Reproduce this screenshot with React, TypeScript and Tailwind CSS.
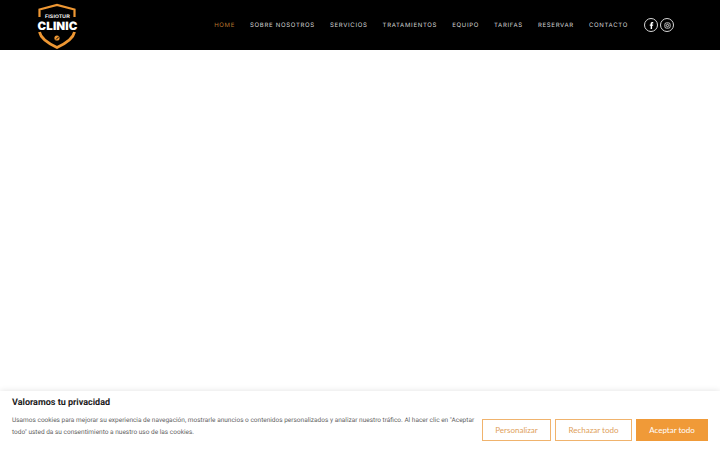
import React from "react";

const nav = ["HOME", "SOBRE NOSOTROS", "SERVICIOS", "TRATAMIENTOS", "EQUIPO", "TARIFAS", "RESERVAR", "CONTACTO"];

function Logo() {
  return (
    <div className="relative w-[41px] h-[46px] shrink-0 mt-[2px]">
      <svg width="41" height="46" viewBox="0 0 41 46" className="absolute inset-0">
        <path d="M2.5 14 L2.5 6.5 L20 2 L37.5 6.5 L37.5 14" fill="none" stroke="#ee9733" strokeWidth="2.2" />
        <path d="M2.5 29 Q4 37 20 44.5 Q36 37 37.5 29" fill="none" stroke="#ee9733" strokeWidth="2.8" />
        <circle cx="20" cy="35" r="2.6" fill="#ee9733" />
        <path d="M19 36.5 L22 33.5" stroke="#000" strokeWidth="1" />
      </svg>
      <div className="absolute left-0 right-0 top-[11px] text-center text-[5px] leading-[6px] font-bold text-white font-['Liberation_Sans',sans-serif] tracking-[0.2px]">FISIOTUR</div>
      <div className="absolute left-0 right-0 top-[16px] text-center text-[11.5px] leading-[14px] font-black tracking-[0.1px] text-white font-['Inter',sans-serif]">CLINIC</div>
    </div>
  );
}

export default function App() {
  return (
    <div className="relative w-[720px] h-[450px] overflow-hidden bg-white font-['Roboto',sans-serif] [text-rendering:geometricPrecision]">
      <header className="h-[50px] bg-black flex items-center pl-[37px] pr-[46px]">
        <Logo />
        <nav className="ml-auto flex items-center gap-[15px] font-['Inter',sans-serif] text-[6px] tracking-[0.7px] text-[#d6d6d6]">
          {nav.map((n, i) => (
            <span key={n} className={i === 0 ? "text-[#b9772f]" : ""}>{n}</span>
          ))}
        </nav>
        <div className="flex items-center gap-[2px] ml-[16px]">
          <span className="w-[14px] h-[14px] rounded-full border border-[#d8d8d8] flex items-center justify-center">
            <svg width="7" height="7" viewBox="0 0 24 24" fill="#fff"><path d="M14 8.5V6.3c0-1 .6-1.3 1.2-1.3H18V0h-3.8C10.6 0 9 2.6 9 5.6v2.9H6V13h3v11h5V13h3.4l.6-4.5z" /></svg>
          </span>
          <span className="w-[14px] h-[14px] rounded-full border border-[#d8d8d8] flex items-center justify-center">
            <svg width="7" height="7" viewBox="0 0 24 24" fill="none" stroke="#fff" strokeWidth="2.6"><rect x="3" y="3" width="18" height="18" rx="5" /><circle cx="12" cy="12" r="4" /></svg>
          </span>
        </div>
      </header>
      <div className="absolute left-0 right-0 bottom-0 h-[59px] bg-white shadow-[0_0_6px_rgba(0,0,0,0.12)] pl-[12px] pr-[12px] flex items-end pb-[9px]">
        <div className="w-[458px] pb-[3px]">
          <h2 className="text-[9px] leading-[12px] font-bold text-[#212121]">Valoramos tu privacidad</h2>
          <p className="mt-[6px] text-[6.5px] leading-[11.5px] text-[#636363] whitespace-nowrap">
            Usamos cookies para mejorar su experiencia de navegación, mostrarle anuncios o contenidos personalizados y analizar nuestro tráfico. Al hacer clic en "Aceptar<br />todo" usted da su consentimiento a nuestro uso de las cookies.
          </p>
        </div>
        <div className="ml-auto flex items-center gap-[4px] font-['Lato',sans-serif] text-[8px]">
          <button className="w-[69px] h-[22px] border-[1.5px] border-[#f0b36d] text-[#e0a05a] bg-white">Personalizar</button>
          <button className="w-[77px] h-[22px] border-[1.5px] border-[#f0b36d] text-[#e0a05a] bg-white">Rechazar todo</button>
          <button className="w-[72px] h-[22px] bg-[#f09a38] text-white">Aceptar todo</button>
        </div>
      </div>
    </div>
  );
}
